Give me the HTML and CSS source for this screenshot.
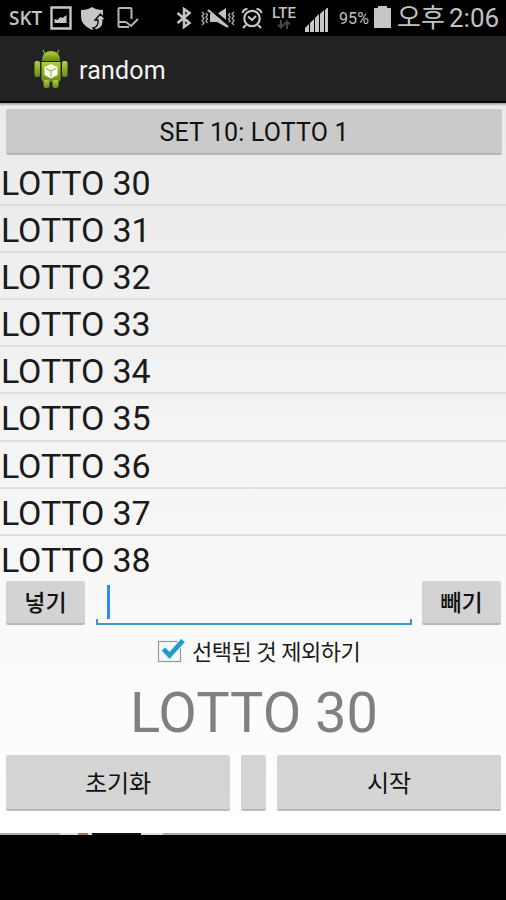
FILE: index.html
```html
<!DOCTYPE html>
<html lang="ko">
<head>
    <meta charset="UTF-8">
    <meta name="viewport" content="width=device-width, initial-scale=1.0">
    <title>random</title>
    <link rel="stylesheet" href="styles.css">
</head>
<body>
    <div class="status-bar">
        <span class="carrier">SKT</span>
        <svg class="icon-picture" width="22" height="24" viewBox="0 0 22 24">
            <path d="M1.5 1.5h19v21h-19z" fill="none" stroke="#c6c6c6" stroke-width="2.4"/>
            <path d="M4.500 17v-4l3 1 3-3 2 1 4-3v8z" fill="#c6c6c6"/>
        </svg>
        <svg class="icon-shield" width="26" height="24" viewBox="0 0 26 24">
            <path d="M0 3Q7 3 11 0q4 3 11 3v7q-1 8-11 13Q0 18 0 10z" fill="#c6c6c6"/>
            <path d="M12 21q5-1 5-6v-2h-3l5.500-6 5.500 6h-3v2q0 6-7 8z" fill="#c6c6c6" stroke="#000" stroke-width="1.300"/>
        </svg>
        <svg class="icon-phone" width="22" height="22" viewBox="0 0 22 22">
            <path d="M14.500 12V2q0-1-1-1H2.500q-1 0-1 1v17q0 1 1 1H12M2 15h7" fill="none" stroke="#b4b4b4" stroke-width="2"/>
            <path d="M9 15l5 4 7-7" fill="none" stroke="#b4b4b4" stroke-width="2"/>
        </svg>
        <svg class="icon-bluetooth" width="16" height="22" viewBox="0 0 16 22">
            <path d="M1.500 6l12 10L8 20V2l5.500 4-12 10" fill="none" stroke="#c6c6c6" stroke-width="2.500"/>
        </svg>
        <svg class="icon-mute" width="34" height="21" viewBox="0 0 34 21">
            <path d="M1 4l2 2-2 2 2 2.500-2 2 2 2.500-2 2M5 5l1.500 2L5 9l1.500 2L5 13l1.500 2M33 4l-2 2 2 2-2 2.500 2 2-2 2.500 2 2M29 5l-1.500 2L29 9l-1.500 2 1.500 2-1.500 2" fill="none" stroke="#aaa" stroke-width="1.300"/>
            <path d="M9 6h7l9-6v19l-9-5H9z" fill="#c0c0c0"/>
            <path d="M8 1l20 16" stroke="#000" stroke-width="4.500"/>
            <path d="M7 2l20 17" stroke="#c6c6c6" stroke-width="2.200"/>
        </svg>
        <svg class="icon-alarm" width="22" height="22" viewBox="0 0 22 22">
            <g fill="none" stroke="#c6c6c6" stroke-width="2.200">
                <circle cx="11" cy="11.500" r="7.700"/>
                <path d="M1.500 6q1-4 5-4M20.500 6q-1-4-5-4M5 18l-3 3M17 18l3 3M7 9.500l4 3.500 4-4"/>
            </g>
        </svg>
        <div class="network">
            <span class="lte">LTE</span>
            <svg width="14" height="9" viewBox="0 0 14 9">
                <path d="M4 0v7M1 4.500l3 3 3-3M10 9V2M7 4.500l3-3 3 3" fill="none" stroke="#454545" stroke-width="2"/>
            </svg>
        </div>
        <svg class="icon-signal" width="24" height="24" viewBox="0 0 24 24">
            <path d="M0 24v-4l4-4v8zM5 24v-9l4-4v13zM10 24V10l4-4v18zM15 24V6l4-4v22zM20 24V2l3-3v25z" fill="#c6c6c6"/>
        </svg>
        <span class="percent">95%</span>
        <svg class="icon-battery" width="17" height="22" viewBox="0 0 17 22">
            <path d="M0 2h4V0h9v2h4v20H0z" fill="#c6c6c6"/>
        </svg>
        <span class="meridiem">오후</span>
        <span class="time">2:06</span>
    </div>

    <header class="action-bar">
        <svg class="app-icon" width="34" height="40" viewBox="0 0 34 40">
            <defs>
                <linearGradient id="robot" x1="0" y1="0" x2="0" y2="1">
                    <stop offset="0" stop-color="#b4cf3c"/>
                    <stop offset="1" stop-color="#668a16"/>
                </linearGradient>
            </defs>
            <path d="M11 5L9 1M23 5l2-4" stroke="#7e9632" stroke-width="1.500"/>
            <g fill="url(#robot)">
                <path d="M8 12q0-10 9-10t9 10z"/>
                <path d="M7.500 13h19v17q0 3-3 3h-13q-3 0-3-3z"/>
                <rect x="0.500" y="12" width="5.500" height="16" rx="2"/>
                <rect x="28" y="12" width="5.500" height="16" rx="2"/>
                <rect x="9.500" y="31" width="6" height="8" rx="2"/>
                <rect x="18.500" y="31" width="6" height="8" rx="2"/>
            </g>
            <path d="M17 15l6.500 3v8L17 29.500 10.500 26v-8z" fill="#f7faef"/>
            <path d="M12 19.500l5 2.500 5-2.500M17 22v6" fill="none" stroke="#9fba58" stroke-width="1.200"/>
        </svg>
        <h1>random</h1>
    </header>

    <main class="content">
        <button class="btn set-btn" type="button">SET 10: LOTTO 1</button>
        <ul class="lotto-list">
            <li>LOTTO 30</li>
            <li>LOTTO 31</li>
            <li>LOTTO 32</li>
            <li>LOTTO 33</li>
            <li>LOTTO 34</li>
            <li>LOTTO 35</li>
            <li>LOTTO 36</li>
            <li>LOTTO 37</li>
            <li>LOTTO 38</li>
        </ul>
        <div class="input-row">
            <button class="btn" type="button">넣기</button>
            <div class="text-field"><span class="caret"></span></div>
            <button class="btn" type="button">빼기</button>
        </div>
        <div class="exclude">
            <svg width="30" height="28" viewBox="0 0 30 28">
                <rect x="2.500" y="4.500" width="22" height="20" fill="#f4fafc" stroke="#999" stroke-width="1.200"/>
                <path d="M7.500 12l6 6.500L27 3.500" fill="none" stroke="#d5f0fa" stroke-width="7"/>
                <path d="M7.500 12l6 6.500L27 3.500" fill="none" stroke="#2498c4" stroke-width="4.500"/>
            </svg>
            <span>선택된 것 제외하기</span>
        </div>
        <div class="result">LOTTO 30</div>
        <div class="actions">
            <button class="btn" type="button">초기화</button>
            <button class="btn" type="button"></button>
            <button class="btn" type="button">시작</button>
        </div>
        <div class="ad-edge">
            <span class="ad-dot"></span>
            <span class="ad-dark"></span>
        </div>
    </main>
</body>
</html>
```
FILE: styles.css
```css
* {
    box-sizing: border-box;
}
body {
    margin: 0;
    height: 900px;
    overflow: hidden;
    background: #000;
    color: #1a1a1a;
    font-family: Roboto, "Noto Sans CJK KR", sans-serif;
}
.status-bar {
    display: flex;
    align-items: flex-start;
    height: 36px;
    padding-left: 9px;
    color: #c2c2c2;
    white-space: nowrap;
}
.status-bar svg,
.status-bar span {
    flex: none;
}
.carrier {
    width: 41px;
    margin-top: 6px;
    font: 600 19px/24px "Open Sans", sans-serif;
}
.icon-picture {
    margin-top: 6px;
}
.icon-shield {
    margin: 7px 0 0 9px;
}
.icon-phone {
    margin: 7px 0 0 10px;
}
.icon-bluetooth {
    margin: 7px 0 0 37px;
}
.icon-mute {
    margin: 8px 0 0 9px;
}
.icon-alarm {
    margin: 7px 0 0 6px;
}
.network {
    display: flex;
    flex-direction: column;
    align-items: center;
    width: 26px;
    margin: 7px 0 0 8px;
}
.lte {
    font-size: 15px;
    font-weight: 500;
    line-height: 13px;
}
.icon-signal {
    margin: 8px 0 0 8px;
}
.percent {
    width: 35px;
    margin: 7px 0 0 10px;
    font-size: 16px;
    line-height: 24px;
    letter-spacing: 0.1px;
}
.icon-battery {
    margin-top: 6px;
}
.meridiem {
    width: 52px;
    margin: 0 0 0 6px;
    font-size: 26px;
    line-height: 36px;
}
.time {
    margin-top: 2px;
    font-size: 26px;
    line-height: 32px;
}
.action-bar {
    display: flex;
    align-items: center;
    height: 67px;
    padding: 0 0 0 34px;
    background: #222;
    border-bottom: 2px solid #050505;
}
.app-icon {
    margin-top: 1px;
}
.action-bar h1 {
    margin: 5px 0 0 11px;
    color: #f3f3f3;
    font-size: 25px;
    font-weight: 400;
    line-height: 30px;
    letter-spacing: 0.2px;
}
.content {
    height: 731px;
    padding-top: 6px;
    background:
        linear-gradient(#999, transparent) top / 100% 3px no-repeat,
        linear-gradient(#eaeaea, #fff);
}
.btn {
    padding: 3px 0 0;
    background: rgba(190, 190, 190, 0.65);
    border: 0;
    border-bottom: 2px solid #b8b8b8;
    border-radius: 2px;
    color: #111;
    font: 400 24px/30px Roboto, "Noto Sans CJK KR", sans-serif;
}
.set-btn {
    display: block;
    width: 496px;
    height: 46px;
    margin: 0 0 0 6px;
    background: #cacaca;
    font-size: 25px;
    letter-spacing: 0.15px;
}
.lotto-list {
    height: 422px;
    margin: 4px 0 0;
    padding: 0;
    list-style: none;
}
.lotto-list li {
    height: 47.1px;
    padding: 0 0 0 1px;
    border-bottom: 2px solid #dedede;
    font-size: 34px;
    line-height: 48px;
    letter-spacing: -0.15px;
}
.lotto-list li:last-child {
    border-bottom: 0;
}
.input-row {
    display: grid;
    grid-template-columns: 79px 316px 79px;
    gap: 10.5px;
    height: 44px;
    margin: 0 0 0 6px;
}
.input-row .btn {
    font-size: 23px;
    font-weight: 500;
}
/* bracket-shaped underline of the text field */
.text-field {
    padding: 4px 0 0 11px;
    background:
        linear-gradient(#3d97c6, #3d97c6) left bottom / 2px 6px no-repeat,
        linear-gradient(#3d97c6, #3d97c6) right bottom / 2px 6px no-repeat,
        linear-gradient(#3d97c6, #3d97c6) left bottom / 100% 2px no-repeat;
}
.caret {
    display: block;
    width: 3px;
    height: 34px;
    background: #318bf5;
}
.exclude {
    display: flex;
    align-items: center;
    gap: 6px;
    height: 28px;
    margin: 12px 0 0 156px;
    font-size: 22px;
    letter-spacing: -0.45px;
}
.exclude span {
    margin-top: -2px;
}
.result {
    margin-top: 10px;
    padding-left: 2px;
    color: #808080;
    font-size: 56px;
    line-height: 76px;
    text-align: center;
}
.actions {
    display: grid;
    grid-template-columns: 224px 25px 224px;
    gap: 11px;
    height: 56px;
    margin: 4px 0 0 6px;
}
/* top edge of the banner, cut off by the navigation area */
.ad-edge {
    display: flex;
    height: 2px;
    margin-top: 22px;
    padding-left: 78px;
    background: linear-gradient(90deg, #aaa 59px, #ddd 60px, #ddd 162px, #aaa 163px);
}
.ad-dot {
    width: 10px;
    background: #a07a40;
}
.ad-dark {
    width: 49px;
    margin-left: 4px;
    background: #111;
}
```
